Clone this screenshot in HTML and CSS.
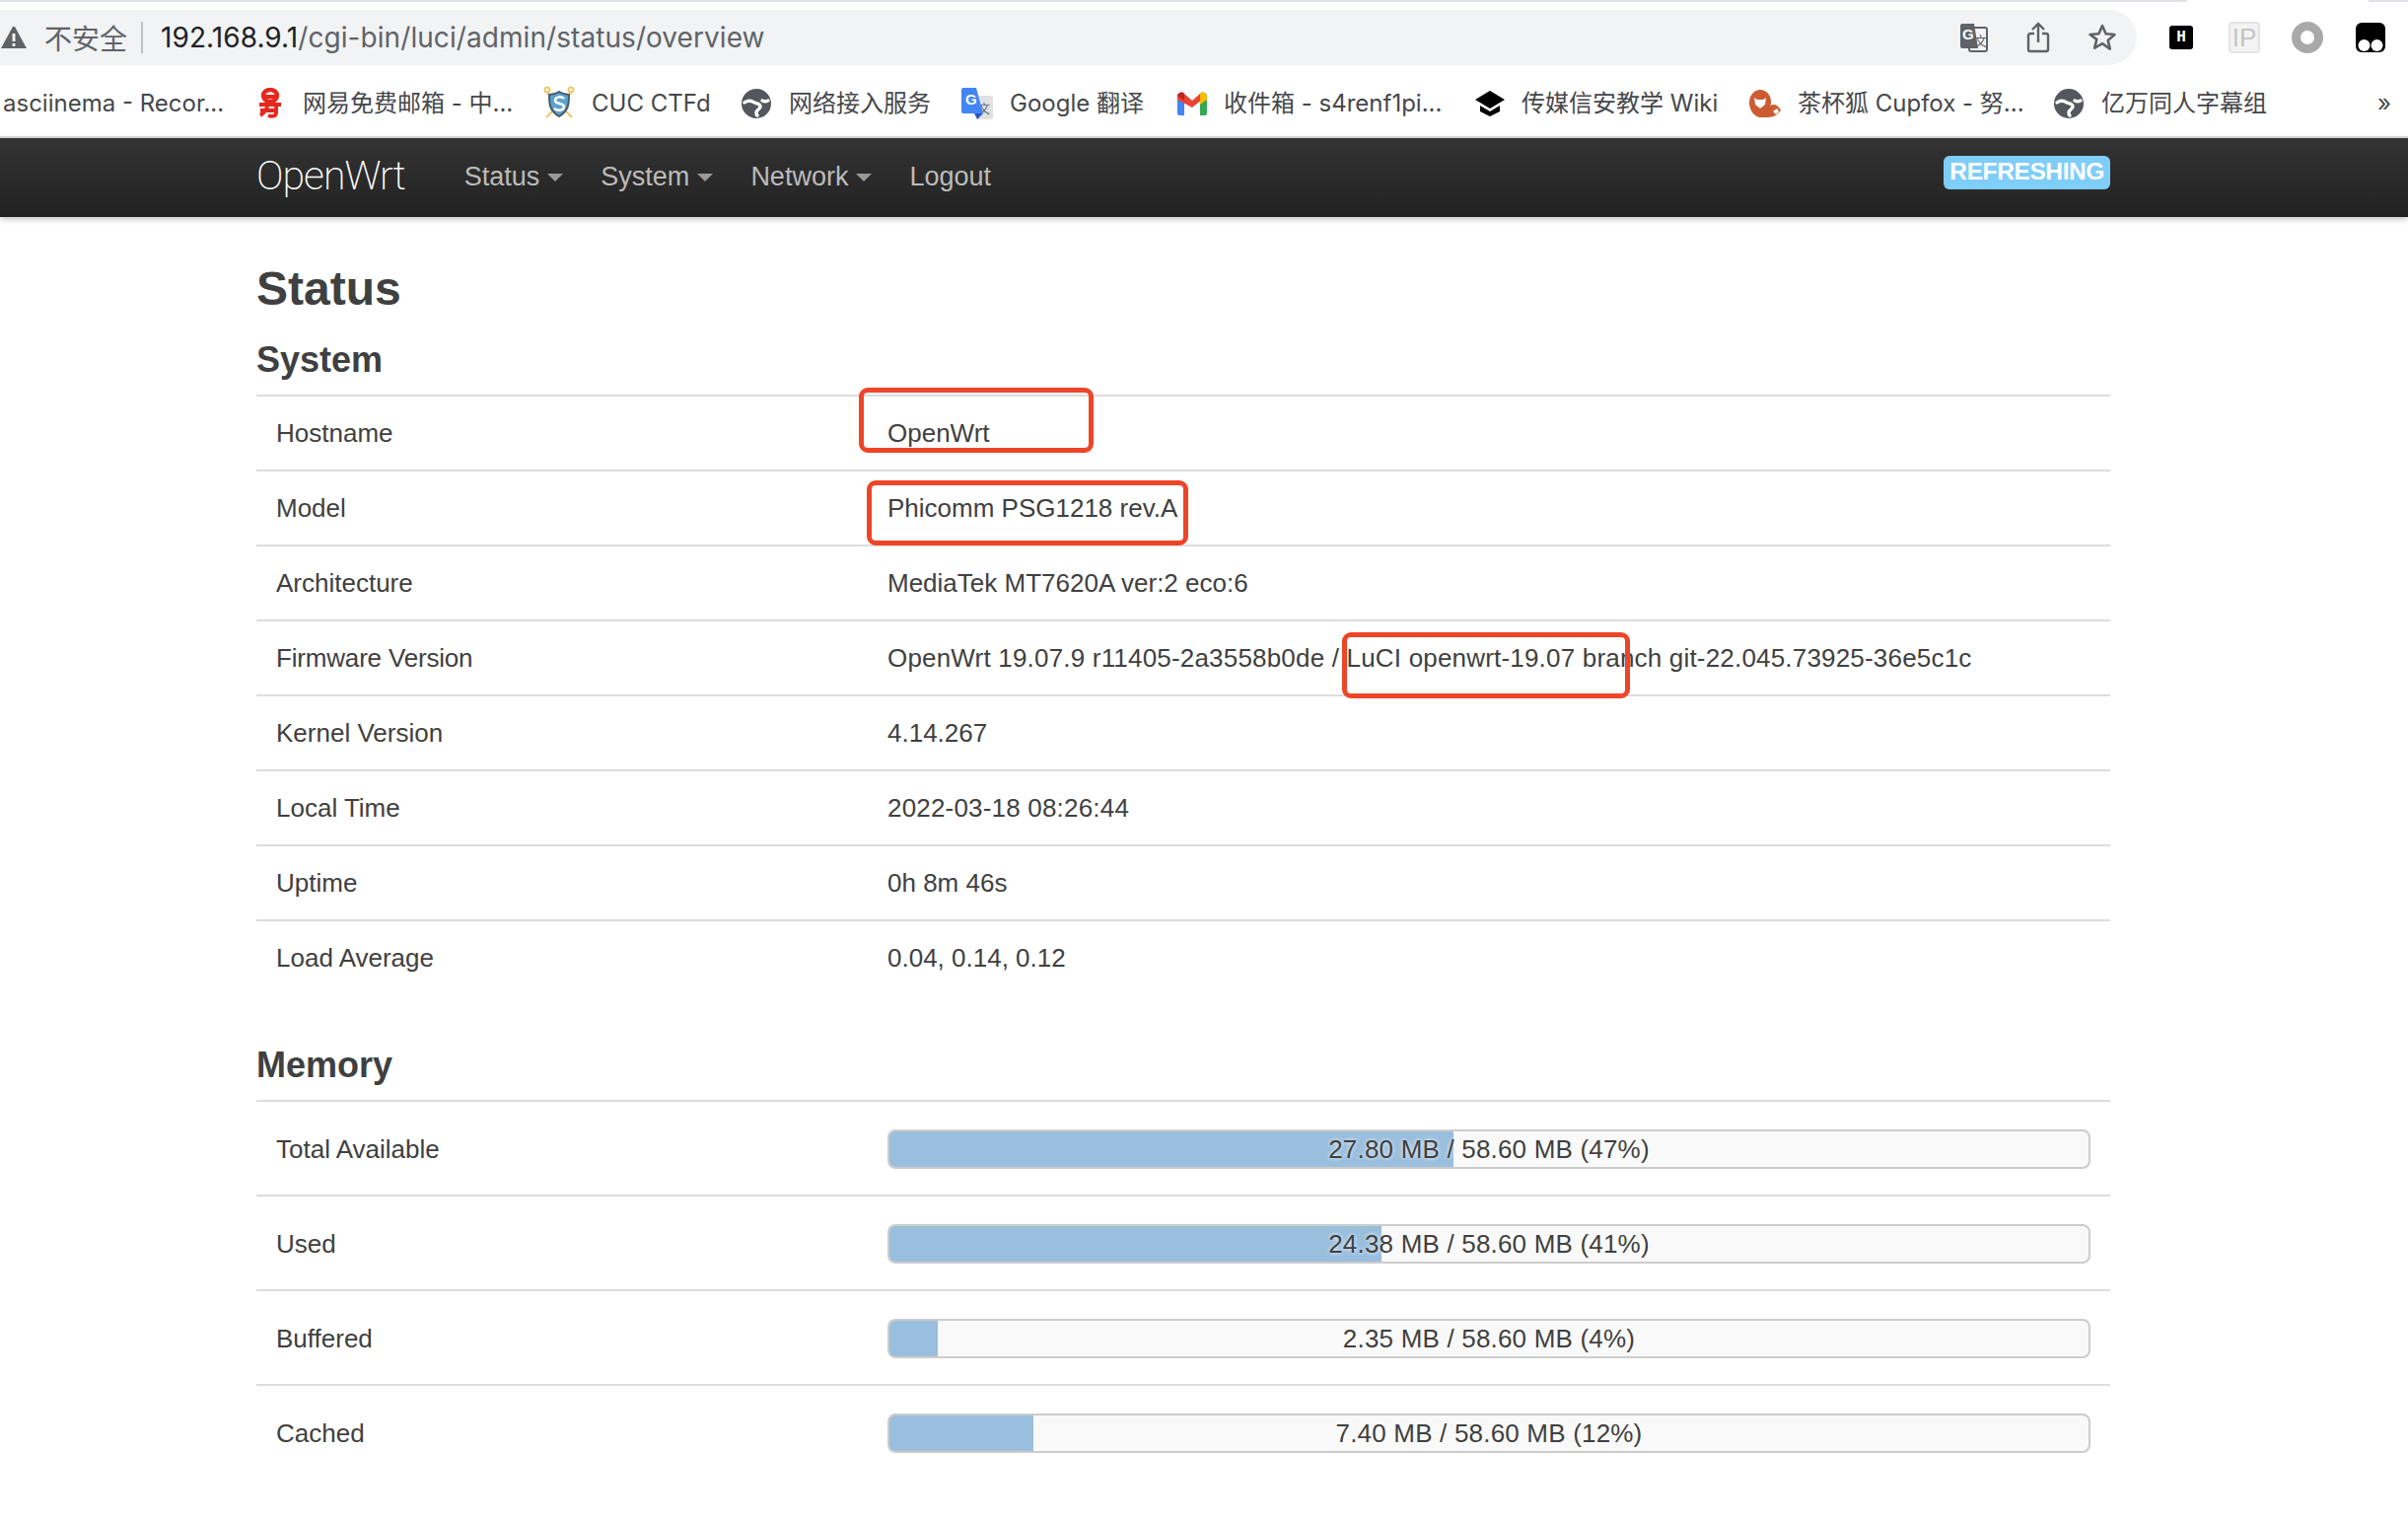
FILE: index.html
```html
<!DOCTYPE html>
<html lang="en">
<head>
    <meta charset="UTF-8">
    <meta name="viewport" content="width=device-width, initial-scale=1.0">
    <title>OpenWrt - Overview - LuCI</title>

    <link rel="stylesheet" href="styles.css">
</head>
<body>

<svg class="defs" width="0" height="0">
    <symbol id="globe" viewBox="0 0 32 32">
        <circle cx="16" cy="16" r="15" fill="#54575c"/>
        <g fill="none" stroke="#fff" stroke-width="3.400" stroke-linecap="round">
            <path d="M4 15c4-3 7-2 10 0 2 1 6 1 6 4s-4 3-4 6 0 2 1 3"/>
            <path d="M28 13c-2 1-4 1-6 0"/>
        </g>
    </symbol>
</svg>

<div class="browser">
    <div class="tabstrip"></div>
    <div class="toolbar">
        <div class="omnibox">
            <svg class="warn" width="26" height="24" viewBox="0 0 26 24"><path d="M12 1h2l12 22H0z" fill="#5f6368"/><rect x="11.6" y="8" width="2.8" height="8" fill="#fff"/><rect x="11.6" y="18" width="2.8" height="2.8" fill="#fff"/></svg>
            <span class="insecure">不安全</span>
            <span class="sep"></span>
            <span class="url"><b>192.168.9.1</b>/cgi-bin/luci/admin/status/overview</span>
            <div class="omni-icons">
                <svg width="30" height="30" viewBox="0 0 30 30">
                    <rect x="10" y="5" width="18" height="24" rx="2" fill="#f1f3f4" stroke="#5f6368" stroke-width="2"/>
                    <path d="M3 1h12l4 25H3a2 2 0 0 1-2-2V3a2 2 0 0 1 2-2z" fill="#5f6368"/>
                    <text x="3" y="17" class="ico-g">G</text>
                    <text x="15" y="23" class="ico-wen">文</text>
                </svg>
                <svg width="24" height="32" viewBox="0 0 24 32" fill="none" stroke="#5f6368" stroke-width="2.4">
                    <path d="M8 12H4a2 2 0 0 0-2 2v14a2 2 0 0 0 2 2h16a2 2 0 0 0 2-2V14a2 2 0 0 0-2-2h-4"/>
                    <path d="M12 21V3M6 8l6-6 6 6"/>
                </svg>
                <svg width="30" height="30" viewBox="0 0 30 30" fill="none" stroke="#5f6368" stroke-width="2.6" stroke-linejoin="round">
                    <path d="M15 3l3.6 8.2 8.9.8-6.800 5.900 2.100 8.700L15 21.100 7.200 25.600l2.100-8.700L2.500 12l8.900-.8z"/>
                </svg>
            </div>
        </div>
        <div class="ext-icons">
            <div class="ext-h">H</div>
            <div class="ext-ip">IP</div>
            <div class="ext-ring"></div>
            <svg width="32" height="32" viewBox="0 0 32 32">
                <rect x="1" y="1" width="30" height="30" rx="6" fill="#000"/>
                <circle cx="9.500" cy="24" r="6" fill="#fff"/>
                <circle cx="22.500" cy="24" r="6" fill="#fff"/>
            </svg>
        </div>
    </div>
    <div class="bookmarks">
        <div class="bm"><span>asciinema - Recor...</span></div>
        <div class="bm">
            <svg width="32" height="32" viewBox="0 0 32 32" fill="none" stroke="#e5281e" stroke-width="4.400">
                <ellipse cx="16" cy="8" rx="7" ry="6"/>
                <path d="M10 9h12M5 17h22M14 15c-1 6-3 10-8 13M22 19c0 5 1 7-1 9-2 1-5 1-7 0M6 23h16" stroke-width="3.800"/>
            </svg>
            <span>网易免费邮箱 - 中...</span>
        </div>
        <div class="bm">
            <svg width="32" height="36" viewBox="0 0 32 36">
                <g fill="none" stroke="#ecc86b" stroke-width="2"><path d="M3 6l26 26M29 6L3 32"/><circle cx="4" cy="4" r="2.500"/><circle cx="28" cy="4" r="2.500"/></g>
                <path d="M16 6c3 2 6 3 10 3 0 9 0 16-10 22C6 25 6 18 6 9c4 0 7-1 10-3z" fill="#5ba3cf" stroke="#4b5a66" stroke-width="2"/>
                <path d="M21 13c-3-3-9-2-9 2s9 2 9 6-6 5-10 2" fill="none" stroke="#fff" stroke-width="2.400"/>
            </svg>
            <span>CUC CTFd</span>
        </div>
        <div class="bm"><svg width="32" height="32"><use href="#globe"/></svg><span>网络接入服务</span></div>
        <div class="bm">
            <svg width="32" height="32" viewBox="0 0 32 32">
                <path d="M14 8h16a2 2 0 0 1 2 2v20a2 2 0 0 1-2 2H16z" fill="#dfe1e5"/>
                <text x="17" y="26" class="ico-wen bm-wen">文</text>
                <path d="M2 0h13l7 26H2a2 2 0 0 1-2-2V2a2 2 0 0 1 2-2z" fill="#4285f4"/>
                <path d="M13 26h9l-6 6z" fill="#2a56c6"/>
                <text x="4" y="17" class="ico-g">G</text>
            </svg>
            <span>Google 翻译</span>
        </div>
        <div class="bm">
            <svg width="30" height="24" viewBox="0 0 30 24">
                <path d="M0 4a4 4 0 0 1 7-2v22H2a2 2 0 0 1-2-2z" fill="#4285f4"/>
                <path d="M30 4a4 4 0 0 0-7-2v22h5a2 2 0 0 0 2-2z" fill="#34a853"/>
                <path d="M0 4l7-2 8 7 8-7 2 6-10 8L0 8z" fill="#ea4335"/>
                <path d="M23 2a4 4 0 0 1 7 2v4l-7 5z" fill="#fbbc04"/>
                <path d="M0 4a4 4 0 0 1 7-2v7z" fill="#c5221f"/>
            </svg>
            <span>收件箱 - s4renf1pi...</span>
        </div>
        <div class="bm">
            <svg width="30" height="26" viewBox="0 0 30 26">
                <path d="M15 0l15 9-15 9L0 9z" fill="#000"/>
                <path d="M5 15l10 6 10-6v6l-10 5-10-5z" fill="#000"/>
            </svg>
            <span>传媒信安教学 Wiki</span>
        </div>
        <div class="bm">
            <svg width="32" height="28" viewBox="0 0 32 28">
                <path d="M11 0c6 0 11 5 11 12 0 2 0 3-1 4 4-2 8-1 11 5l-4 4c-2 2-6 3-10 3H10C4 26 0 20 0 13 0 6 5 0 11 0z" fill="#cd5b32"/>
                <path d="M5 8l3 2h6l3-2-1 7-5 4-5-4z" fill="#fff"/>
                <path d="M24 22l4-3 2 3-3 3z" fill="#fff"/>
            </svg>
            <span>茶杯狐 Cupfox - 努...</span>
        </div>
        <div class="bm"><svg width="32" height="32"><use href="#globe"/></svg><span>亿万同人字幕组</span></div>
        <div class="bm more">»</div>
    </div>
</div>

<div class="navbar">
    <a class="brand">OpenWrt</a>
    <ul class="nav">
        <li class="dropdown">Status</li>
        <li class="dropdown">System</li>
        <li class="dropdown">Network</li>
        <li>Logout</li>
    </ul>
    <span class="label-refresh">REFRESHING</span>
</div>

<div id="maincontent">
    <h2>Status</h2>

    <h3 class="first">System</h3>
    <div class="table">
        <div class="tr"><div class="td-key">Hostname</div><div>OpenWrt</div></div>
        <div class="tr"><div class="td-key">Model</div><div>Phicomm PSG1218 rev.A</div></div>
        <div class="tr"><div class="td-key">Architecture</div><div>MediaTek MT7620A ver:2 eco:6</div></div>
        <div class="tr"><div class="td-key tight">Firmware Version</div><div class="num">OpenWrt 19.07.9 r11405-2a3558b0de / LuCI openwrt-19.07 branch git-22.045.73925-36e5c1c</div></div>
        <div class="tr"><div class="td-key">Kernel Version</div><div>4.14.267</div></div>
        <div class="tr"><div class="td-key">Local Time</div><div class="num">2022-03-18 08:26:44</div></div>
        <div class="tr"><div class="td-key">Uptime</div><div>0h 8m 46s</div></div>
        <div class="tr"><div class="td-key">Load Average</div><div>0.04, 0.14, 0.12</div></div>
    </div>

    <h3 class="second">Memory</h3>
    <div class="table memory">
        <div class="tr"><div class="td-key">Total Available</div><div class="progress"><div class="fill" style="width:47%"></div><span>27.80 MB / 58.60 MB (47%)</span></div></div>
        <div class="tr"><div class="td-key">Used</div><div class="progress"><div class="fill" style="width:41%"></div><span>24.38 MB / 58.60 MB (41%)</span></div></div>
        <div class="tr"><div class="td-key">Buffered</div><div class="progress"><div class="fill" style="width:4%"></div><span>2.35 MB / 58.60 MB (4%)</span></div></div>
        <div class="tr"><div class="td-key">Cached</div><div class="progress"><div class="fill" style="width:12%"></div><span>7.40 MB / 58.60 MB (12%)</span></div></div>
    </div>
</div>

<!-- red boxes drawn over the screenshot -->
<div class="mark mark-host"></div>
<div class="mark mark-model"></div>
<div class="mark mark-luci"></div>

</body>
</html>
```

FILE: styles.css
```css
* {
    box-sizing: border-box;
}

body {
    margin: 0;
    padding: 0;
    height: 1544px;
    overflow: hidden;
    position: relative;
    background: #fff;
    color: #404040;
    font-family: "Liberation Sans", "Noto Sans CJK SC", sans-serif;
    font-size: 26px;
}

.defs {
    position: absolute;
}

/* browser chrome */
.browser {
    font-family: Inter, "Noto Sans CJK SC", sans-serif;
}
.tabstrip {
    height: 2px;
    background: linear-gradient(to right, #dee1e6 2218px, #fff 2218px, #fff 2402px, #dee1e6 2402px);
}
.toolbar {
    height: 64px;
    padding-top: 8px;
    display: flex;
}
.omnibox {
    width: 2167px;
    height: 56px;
    background: #f1f3f4;
    border-radius: 0 28px 28px 0;
    display: flex;
    align-items: center;
    padding-left: 1px;
    font-size: 28px;
    color: #5f6368;
}
.insecure {
    margin-left: 18px;
    font-family: "Noto Sans CJK SC", sans-serif;
    font-size: 28px;
}
.sep {
    width: 2px;
    height: 32px;
    background: #bdc1c6;
    margin: 0 18px 0 14px;
}
.url {
    letter-spacing: .07px;
}
.url b {
    font-weight: 400;
    color: #202124;
}
.omni-icons {
    margin-left: auto;
    margin-right: 20px;
    display: flex;
    align-items: center;
    gap: 38px;
}
.ico-g {
    font: bold 15px "Liberation Sans", sans-serif;
    fill: #fff;
}
.ico-wen {
    font: 13px "Noto Sans CJK SC", sans-serif;
    fill: #5f6368;
}
.ext-icons {
    width: 275px;
    padding-left: 33px;
    display: flex;
    align-items: center;
    height: 56px;
    gap: 32px;
}
.ext-h {
    width: 24px;
    height: 24px;
    background: #000;
    color: #fff;
    border-radius: 3px;
    font: bold 16px "Liberation Mono", monospace;
    text-align: center;
    line-height: 24px;
}
.ext-ip {
    width: 32px;
    height: 32px;
    margin-left: 4px;
    background: #f3f3f3;
    border: 2px solid #e4e4e4;
    border-radius: 4px;
    color: #c4c4c4;
    font: 26px/28px "Liberation Sans", sans-serif;
    text-align: center;
}
.ext-ring {
    width: 32px;
    height: 32px;
    border: 9px solid #a9a9a9;
    border-radius: 50%;
}

.bookmarks {
    height: 74px;
    padding: 6px 0 0 3px;
    display: grid;
    grid-template-columns: 255px 293px 200px 224px 219px 302px 278px 308px 329px auto;
    align-items: center;
    border-bottom: 2px solid #dcdcdc;
    font-size: 24px;
    line-height: 36px;
    color: #45474a;
    white-space: nowrap;
}
.bm {
    display: flex;
    align-items: center;
    gap: 17px;
}
.bm svg {
    flex: none;
}
.bm-wen {
    font-size: 12px;
}

/* navbar */
.navbar {
    height: 80px;
    padding-left: 260px;
    padding-right: 302px;
    display: flex;
    align-items: center;
    background: linear-gradient(to bottom, #333, #222);
    box-shadow: 0 2px 6px rgba(0, 0, 0, .25);
    color: #bbb;
}
.brand {
    font-family: Roboto, sans-serif;
    font-weight: 200;
    font-size: 41px;
    color: #fff;
    margin-right: 60px;
    margin-bottom: 4px;
    letter-spacing: -1px;
}
.nav {
    display: flex;
    list-style: none;
    margin: 0 0 2px;
    padding: 0;
    gap: 38px;
    font-size: 27px;
}
.dropdown::after {
    content: "";
    display: inline-block;
    margin-left: 8px;
    vertical-align: 4px;
    border-top: 8px solid #999;
    border-left: 8px solid transparent;
    border-right: 8px solid transparent;
}
.label-refresh {
    margin-left: auto;
    align-self: flex-start;
    margin-top: 18px;
    height: 34px;
    padding: 0 6px;
    background: #7fcdf9;
    border-radius: 6px;
    color: #fff;
    font-weight: bold;
    font-size: 24.500px;
    line-height: 32px;
    letter-spacing: -.4px;
}

/* content */
#maincontent {
    padding: 43px 302px 0 260px;
}
h2 {
    margin: 0;
    font-size: 48px;
    line-height: 60px;
}
h3 {
    margin: 0;
    font-size: 36px;
    line-height: 40px;
}
h3.first {
    margin-top: 22px;
    margin-bottom: 15px;
}
h3.second {
    margin-top: 52px;
    margin-bottom: 15px;
}
.tr {
    height: 76px;
    display: flex;
    align-items: center;
    border-top: 2px solid #ddd;
}
.td-key {
    flex: 0 0 640px;
    padding-left: 20px;
}
.tight {
    letter-spacing: -.18px;
}
.num {
    letter-spacing: .19px;
}
.memory .tr {
    height: 96px;
    padding-top: 2px;
}
.progress {
    position: relative;
    width: 1220px;
    height: 40px;
    background: #f9f9f9;
    border: 2px solid #ccc;
    border-radius: 8px;
    overflow: hidden;
    text-align: center;
    line-height: 36px;
    letter-spacing: .19px;
}
.progress span {
    position: relative;
    text-shadow: 0 0 4px #fff;
}
.fill {
    position: absolute;
    top: 0;
    left: 0;
    bottom: 0;
    background: #9abedd;
}

/* annotations */
.mark {
    position: absolute;
    border: 5px solid #ee4528;
    border-radius: 9px;
}
.mark-host {
    left: 871px;
    top: 393px;
    width: 238px;
    height: 66px;
}
.mark-model {
    left: 879px;
    top: 487px;
    width: 326px;
    height: 66px;
}
.mark-luci {
    left: 1361px;
    top: 641px;
    width: 292px;
    height: 67px;
}
```
